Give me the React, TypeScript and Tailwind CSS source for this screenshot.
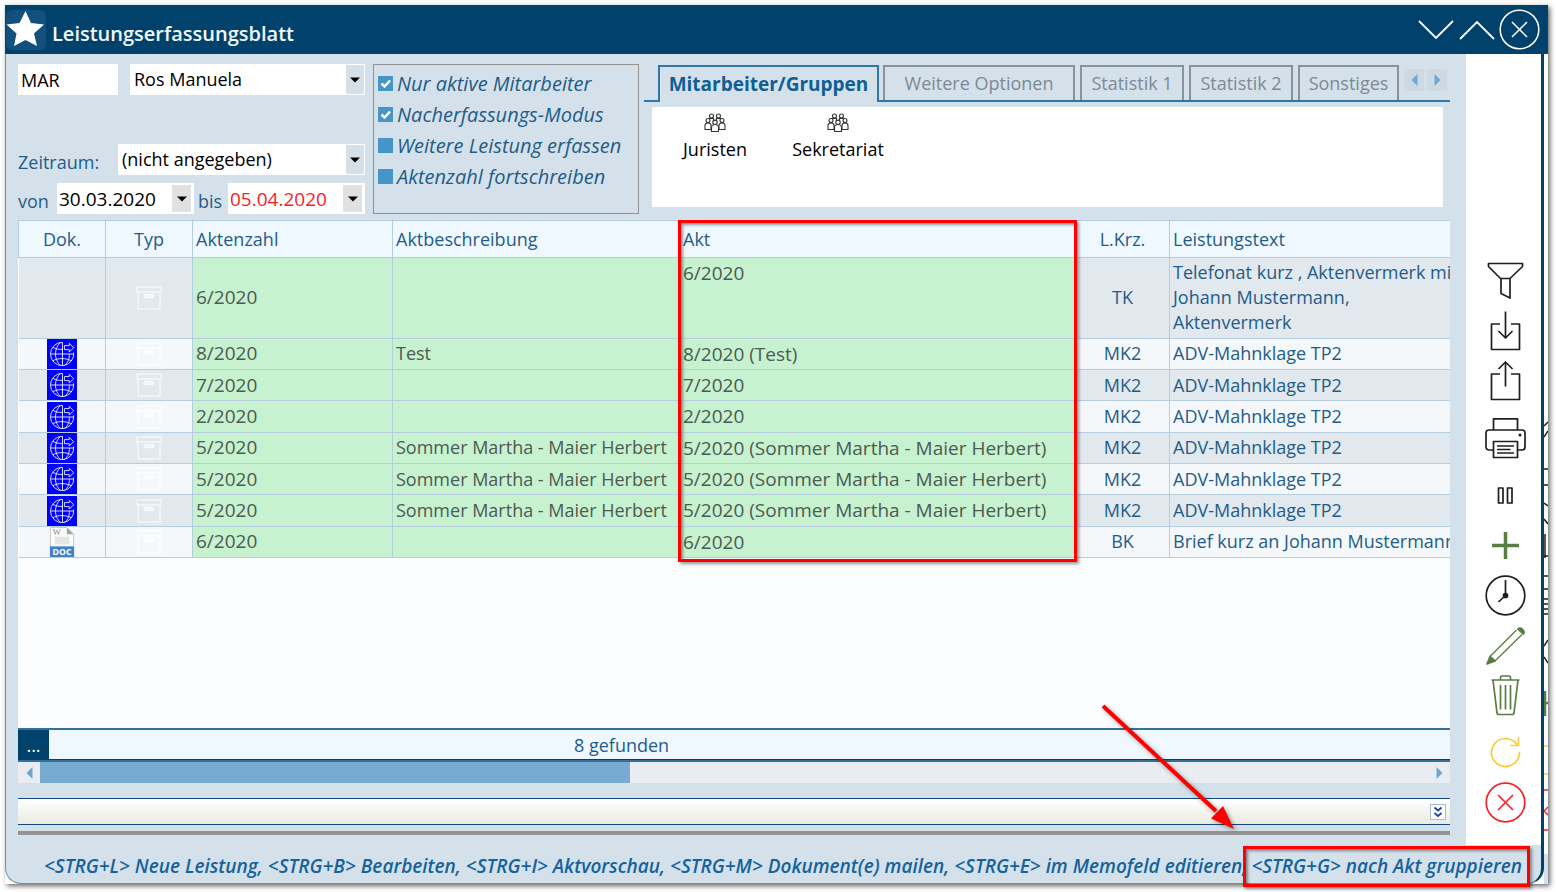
import React, { useState } from 'react';

interface Entry {
  doc: 'none' | 'web' | 'word';
  file: string;
  description: string;
  akt: string;
  code: string;
  text: string[];
}

const sommer = 'Sommer Martha - Maier Herbert';

const ENTRIES: Entry[] = [
  { doc: 'none', file: '6/2020', description: '', akt: '6/2020', code: 'TK', text: ['Telefonat kurz , Aktenvermerk mit', 'Johann Mustermann,', 'Aktenvermerk'] },
  { doc: 'web', file: '8/2020', description: 'Test', akt: '8/2020 (Test)', code: 'MK2', text: ['ADV-Mahnklage TP2'] },
  { doc: 'web', file: '7/2020', description: '', akt: '7/2020', code: 'MK2', text: ['ADV-Mahnklage TP2'] },
  { doc: 'web', file: '2/2020', description: '', akt: '2/2020', code: 'MK2', text: ['ADV-Mahnklage TP2'] },
  { doc: 'web', file: '5/2020', description: sommer, akt: `5/2020 (${sommer})`, code: 'MK2', text: ['ADV-Mahnklage TP2'] },
  { doc: 'web', file: '5/2020', description: sommer, akt: `5/2020 (${sommer})`, code: 'MK2', text: ['ADV-Mahnklage TP2'] },
  { doc: 'web', file: '5/2020', description: sommer, akt: `5/2020 (${sommer})`, code: 'MK2', text: ['ADV-Mahnklage TP2'] },
  { doc: 'word', file: '6/2020', description: '', akt: '6/2020', code: 'BK', text: ['Brief kurz an Johann Mustermann'] },
];

const HINTS = '<STRG+L> Neue Leistung, <STRG+B> Bearbeiten, <STRG+I> Aktvorschau, <STRG+M> Dokument(e) mailen, <STRG+E> im Memofeld editieren,';
const GROUP_HINT = '<STRG+G> nach Akt gruppieren';

const Caret = () => (
  <svg viewBox="0 0 10 6" className="w-[10px] h-[6px]" fill="#000">
    <path d="M0 0.5h10L5 5.5z" />
  </svg>
);

const WebDocIcon = () => (
  <svg viewBox="0 0 31 31" className="block mx-auto w-[30px] h-[30px]" fill="none" stroke="#dfe0ff" strokeWidth="1">
    <rect width="31" height="31" fill="#0000fe" stroke="none" />
    <path d="M16 3.5A12 12 0 1 0 27.500 14" />
    <path d="M16 3.5v24M3.500 15.500h24M14 3.500c-7 6-7 18 0 24M18 27.500c4-3 5.500-8 5-12" />
    <path d="M6 8.500c3 2 6 2.300 10 2.300M6 22.500c5-3 14-3 19 0" />
    <path d="M18 6.800h5V4.500l4.500 4.500-4.500 4.500v-2.500h-5z" />
  </svg>
);

const WordDocIcon = () => (
  <svg viewBox="0 0 31 31" className="block mx-auto w-[30px] h-[30px]">
    <path d="M3.500 0.500h17l7 7v23h-24z" fill="#fbfbfb" stroke="#c9c9c9" />
    <path d="M20.500 0.500v7h7z" fill="#a3a3a3" />
    <rect x="8" y="10" width="15" height="8" fill="#e4e6e4" />
    <rect x="3" y="20" width="25" height="11" fill="#4084c4" />
    <text x="6" y="8.500" fontSize="9" fontFamily="Liberation Serif, serif" fill="#8b8b8b">W</text>
    <text x="15.500" y="29" fontSize="9" fontWeight="700" textAnchor="middle" fontFamily="Open Sans, sans-serif" fill="#fff">DOC</text>
  </svg>
);

const ArchiveIcon = () => (
  <svg viewBox="0 0 26 26" className="block mx-auto w-[26px] h-[26px]" fill="none" stroke="#ffffff" strokeOpacity="0.7" strokeWidth="1.300">
    <path d="M1 2h24v5H1zM2 7v17h22V7" />
    <rect x="8" y="9.500" width="10" height="3" rx="1.500" fill="#ffffff" fillOpacity="0.5" />
  </svg>
);

const PeopleIcon = () => (
  <svg viewBox="0 0 22 20" className="w-[22px] h-[20px]" fill="#fff" stroke="#333" strokeWidth="1.100">
    <path d="M4.500 9V5.500h5V10M12.500 10V5.500h5V9" />
    <circle cx="7.500" cy="3" r="2" />
    <circle cx="14.500" cy="3" r="2" />
    <path d="M1 16.500v-4c0-2 1-2.500 3-2.500s3 1 3 2.500v4zM15 16.500v-4c0-2 1-2.500 3-2.500s3 1 3 2.500v4z" />
    <circle cx="4" cy="7.500" r="2" />
    <circle cx="18" cy="7.500" r="2" />
    <path d="M7.500 18.500v-4c0-2 1.200-3 3.500-3s3.500 1 3.500 3v4z" />
    <circle cx="11" cy="9.300" r="2.200" />
  </svg>
);

interface Tool {
  label: string;
  color: string;
  icon: React.ReactNode;
}

const TOOLS: Tool[][] = [
  [
    { label: 'Filtern', color: '#1e1e1e', icon: <path d="M3.500 2.500h34v3L25 17.500h-9.500L3.500 5.500zM16 17.500V32.500l9 4.500V17.500" /> },
    { label: 'Importieren', color: '#1e1e1e', icon: <path d="M15 13H6.500v25.500h28V13H26M20.500 0.500v26M13.500 20l7 7 7-7" /> },
    { label: 'Exportieren', color: '#1e1e1e', icon: <path d="M15 13H6.500V38.500h28V13H26M20.500 25.500V1.500M13.500 8l7-7 7 7" /> },
  ],
  [
    {
      label: 'Drucken',
      color: '#1e1e1e',
      icon: (
        <>
          <path d="M8.500 12V0.800h24V12M8.500 32H4a3 3 0 0 1-3-3V15a3 3 0 0 1 3-3h33a3 3 0 0 1 3 3v14a3 3 0 0 1-3 3h-4.500" />
          <path d="M8.500 23.500h24V39.500h-24zM12 28h17M12 31.500h13.500M12 35h17" />
          <circle cx="35" cy="17" r="1.500" fill="#1e1e1e" stroke="none" />
        </>
      ),
    },
  ],
  [
    { label: 'Pause', color: '#1e1e1e', icon: <path d="M13.500 13h4.500v15h-4.500zM22.500 13h4.500v15h-4.500z" /> },
    { label: 'Neu', color: '#5a7d41', icon: <path strokeWidth="3.500" d="M20.500 7v27M7 20.500h27" /> },
    {
      label: 'Zeit',
      color: '#1e1e1e',
      icon: (
        <>
          <circle cx="20.500" cy="20.500" r="19.300" />
          <path d="M20.500 5v15.500l-7 6.500" />
          <circle cx="20.500" cy="20.500" r="2" fill="#1e1e1e" />
        </>
      ),
    },
    {
      label: 'Bearbeiten',
      color: '#5a7d41',
      icon: (
        <>
          <path d="M5 31.500L31.500 5M10 36L37 9.500" strokeWidth="1.300" />
          <path d="M5 31.500l-3 7.500 8-3z" fill="#5a7d41" />
          <path d="M33 4c2-3 7.500 1.500 5.500 5z" fill="#5a7d41" />
        </>
      ),
    },
    {
      label: 'Löschen',
      color: '#5a7d41',
      icon: <path d="M6.500 5h28M8 5l4 33q.3 1.500 1.500 1.500h14q1.200 0 1.500-1.500L33 5M15.500 5V2.500q0-1.500 1.500-1.500h7q1.500 0 1.500 1.500V5M15.500 10v24.500M20.500 10v24.500M25.500 10v24.500" />,
    },
  ],
  [
    { label: 'Aktualisieren', color: '#fcc93b', icon: <path d="M34.500 20A14 14 0 1 1 32 12.500M33.500 5.500v8h-8" /> },
    {
      label: 'Schließen',
      color: '#f4242a',
      icon: (
        <>
          <circle cx="20.500" cy="20.500" r="19.300" />
          <path d="M13 13l15 15M28 13L13 28" />
        </>
      ),
    },
  ],
];

interface PickerProps {
  id: string;
  value: string;
  label: string;
}

const Picker: React.FC<PickerProps> = ({ id, value, label }) => (
  <div className="relative flex-1 h-[31px] bg-white">
    <select id={id} aria-label={label} defaultValue={value} className="w-full h-full appearance-none bg-transparent pl-1 pr-6 text-black">
      <option>{value}</option>
    </select>
    <span className="absolute right-px top-px bottom-px w-[18px] bg-[#d5e1ea] flex items-center justify-center pointer-events-none">
      <Caret />
    </span>
  </div>
);

interface DateFieldProps {
  id: string;
  value: string;
  tone: string;
}

const DateField: React.FC<DateFieldProps> = ({ id, value, tone }) => (
  <div className="flex flex-none w-[137px] h-[31px] bg-white items-center pr-[3px]">
    <input id={id} type="text" defaultValue={value} className={`flex-1 min-w-0 h-full pl-[2px] bg-transparent text-[19px] ${tone}`} />
    <button type="button" aria-label="Kalender" className="w-[19px] h-[27px] bg-[#e1e1e1] flex items-center justify-center">
      <Caret />
    </button>
  </div>
);

interface OptionProps {
  id: string;
  label: string;
  initial?: boolean;
}

const Option: React.FC<OptionProps> = ({ id, label, initial = false }) => {
  const [checked, setChecked] = useState(initial);
  return (
    <div className="flex items-center h-[31px] gap-1">
      <span className="relative w-[15px] h-[15px]">
        <input id={id} type="checkbox" checked={checked} onChange={() => setChecked(!checked)} className="block appearance-none w-[15px] h-[15px] bg-[#4595c7]" />
        {checked && (
          <svg viewBox="0 0 15 15" className="absolute inset-0 pointer-events-none" fill="none" stroke="#fff" strokeWidth="2.500">
            <path d="M3.500 7.500l3 3 5.500-6" />
          </svg>
        )}
      </span>
      <label htmlFor={id} className="italic text-[20px] text-[#1f5c88] whitespace-nowrap">{label}</label>
    </div>
  );
};

const TABS = [
  { label: 'Weitere Optionen', width: 'w-[192px]' },
  { label: 'Statistik 1', width: 'w-[104px]' },
  { label: 'Statistik 2', width: 'w-[104px]' },
  { label: 'Sonstiges', width: 'w-[101px]' },
];

const App: React.FC = () => {
  return (
    <div className="min-h-screen flex flex-col bg-white pt-[5px] pl-[5px] pr-2 pb-2 font-['Open_Sans',sans-serif] text-[18px] leading-[25px] text-[#1f5c88]">
      <div className="relative flex-1 flex flex-col bg-white shadow-[2px_2px_5px_rgba(0,0,0,0.6)]">
        <header className="flex items-center h-[49px] bg-[#00426b] pr-2">
          <div className="w-10 h-10 ml-px bg-[#12517d] rounded-md">
            <svg viewBox="0 0 40 40" fill="#fff">
              <path d="M19.500 1l5.500 12 13 1.500-10 9 3 12.500-11.500-6L8 36l2.500-12.500-10-9 13-1.500z" />
            </svg>
          </div>
          <h1 className="flex-1 pl-[6px] pt-2 text-[20px] font-semibold text-[#f3f7fa]">Leistungserfassungsblatt</h1>
          <div className="flex items-center gap-[3px] text-white">
            <button type="button" aria-label="Nach unten">
              <svg viewBox="0 0 38 24" className="w-[38px] h-6" fill="none" stroke="currentColor" strokeWidth="1.800">
                <path d="M2 3l17 17L36 3" />
              </svg>
            </button>
            <button type="button" aria-label="Nach oben">
              <svg viewBox="0 0 38 24" className="w-[38px] h-6" fill="none" stroke="currentColor" strokeWidth="1.800">
                <path d="M2 21L19 4l17 17" />
              </svg>
            </button>
            <button type="button" aria-label="Fenster schließen">
              <svg viewBox="0 0 41 41" className="w-[41px] h-[41px]" fill="none" stroke="currentColor" strokeWidth="1.500">
                <circle cx="20.500" cy="20.500" r="19.300" />
                <path d="M13 13l15 15M28 13L13 28" />
              </svg>
            </button>
          </div>
        </header>

        <div className="flex-1 flex">
          <div className="flex-1 min-w-0 flex flex-col bg-[#d5e1ea] border-l border-b border-[#6992b0] border-r-[3px] border-r-[#00426b] rounded-b-2xl">
            <div className="flex-1 flex">
              <main className="flex-1 min-w-0 flex flex-col pl-3 pr-4 pt-[10px]">
                <section className="flex items-start h-[156px]">
                  <div className="w-[347px] flex flex-col">
                    <div className="flex gap-3 mb-[49px]">
                      <input type="text" aria-label="Kürzel" defaultValue="MAR" className="w-[100px] h-[31px] bg-white pl-[3px] text-black" />
                      <Picker id="employee" label="Mitarbeiter" value="Ros Manuela" />
                    </div>
                    <div className="flex mb-2">
                      <label htmlFor="period" className="w-[100px] pt-[6px]">Zeitraum:</label>
                      <Picker id="period" label="Zeitraum" value="(nicht angegeben)" />
                    </div>
                    <div className="flex justify-between">
                      <label htmlFor="from" className="pt-[6px]">von</label>
                      <div className="flex gap-1">
                        <DateField id="from" value="30.03.2020" tone="text-black" />
                        <label htmlFor="to" className="w-[26px] pt-[6px]">bis</label>
                        <DateField id="to" value="05.04.2020" tone="text-[#fb1b26]" />
                      </div>
                    </div>
                  </div>

                  <div className="ml-2 w-[266px] h-[150px] border border-[#929292] pl-1 pt-[3px]">
                    <Option id="opt-active" label="Nur aktive Mitarbeiter" initial />
                    <Option id="opt-late" label="Nacherfassungs-Modus" initial />
                    <Option id="opt-more" label="Weitere Leistung erfassen" />
                    <Option id="opt-number" label="Aktenzahl fortschreiben" />
                  </div>

                  <div className="flex-1 min-w-0 ml-[5px]">
                    <div className="flex h-[38px] pt-px" role="tablist">
                      <span className="w-[14px] border-b-2 border-[#2f77a6]" />
                      <button type="button" role="tab" aria-selected="true" className="w-[221px] border-2 border-b-0 border-[#2f77a6] font-bold text-[19px] text-[#0f5f94] whitespace-nowrap">
                        Mitarbeiter/Gruppen
                      </button>
                      <div className="flex-1 flex gap-[5px] pl-1 border-b-2 border-[#2f77a6]">
                        {TABS.map((tab) => (
                          <button key={tab.label} type="button" role="tab" aria-selected="false" className={`${tab.width} border-2 border-b-0 border-[#84939c] text-[#7b8a94] whitespace-nowrap`}>
                            {tab.label}
                          </button>
                        ))}
                        <div className="flex gap-[3px] pt-1">
                          <button type="button" aria-label="Zurück" className="w-5 h-[22px] bg-[#cddae3] flex items-center justify-center">
                            <svg viewBox="0 0 7 12" className="w-[7px] h-3" fill="#6ca7d2"><path d="M6.500 0v12L0.500 6z" /></svg>
                          </button>
                          <button type="button" aria-label="Weiter" className="w-5 h-[22px] bg-[#cddae3] flex items-center justify-center">
                            <svg viewBox="0 0 7 12" className="w-[7px] h-3" fill="#6ca7d2"><path d="M0.500 0v12l6-6z" /></svg>
                          </button>
                        </div>
                      </div>
                    </div>
                    <div className="mt-[5px] ml-2 mr-[7px] h-[100px] bg-white flex pt-[6px] text-black">
                      <button type="button" className="w-[126px] h-[50px] flex flex-col items-center gap-1">
                        <PeopleIcon />
                        Juristen
                      </button>
                      <button type="button" className="w-[120px] h-[50px] flex flex-col items-center gap-1">
                        <PeopleIcon />
                        Sekretariat
                      </button>
                    </div>
                  </div>
                </section>

                <section className="relative flex-1 min-h-[508px] bg-[#fbfdff] overflow-hidden">
                  <table className="w-full h-[338px] table-fixed border-collapse whitespace-nowrap">
                    <colgroup>
                      <col className="w-[87px]" />
                      <col className="w-[87px]" />
                      <col className="w-[200px]" />
                      <col className="w-[287px]" />
                      <col className="w-[396px]" />
                      <col className="w-[94px]" />
                      <col />
                    </colgroup>
                    <thead>
                      <tr className="h-[37px] bg-[#f0f8ff] text-left">
                        <th className="border border-[#b6cddd] font-normal text-center">Dok.</th>
                        <th className="border border-[#b6cddd] font-normal text-center">Typ</th>
                        <th className="border border-[#b6cddd] font-normal pl-[3px]">Aktenzahl</th>
                        <th className="border border-[#b6cddd] font-normal pl-[3px]">Aktbeschreibung</th>
                        <th className="border border-[#b6cddd] font-normal pl-[3px]">Akt</th>
                        <th className="border border-[#b6cddd] font-normal text-center">L.Krz.</th>
                        <th className="border border-r-0 border-[#b6cddd] font-normal pl-[3px]">Leistungstext</th>
                      </tr>
                    </thead>
                    <tbody>
                      {ENTRIES.map((entry, i) => (
                        <tr key={i} className={i % 2 === 0 ? 'bg-[#e1e8ee]' : 'bg-[#f4f8fb]'}>
                          <td className="border border-l-0 border-[#b6cddd]">
                            {entry.doc === 'web' && <WebDocIcon />}
                            {entry.doc === 'word' && <WordDocIcon />}
                          </td>
                          <td className="border border-[#b6cddd]"><ArchiveIcon /></td>
                          <td className="border border-[#b6cddd] bg-[#c6f2d0] text-[19px] text-[#4d5a52] pl-[3px]">{entry.file}</td>
                          <td className="border border-[#b6cddd] bg-[#c6f2d0] text-[#4d5a52] pl-[3px]">{entry.description}</td>
                          <td className="border border-[#b6cddd] bg-[#c6f2d0] text-[19px] text-[#4d5a52] pl-[3px] pt-[3px] align-top">{entry.akt}</td>
                          <td className="border border-[#b6cddd] text-center">{entry.code}</td>
                          <td className="border border-r-0 border-[#b6cddd] pl-[3px] py-[2px] overflow-hidden">
                            {entry.text.map((line) => (
                              <div key={line}>{line}</div>
                            ))}
                          </td>
                        </tr>
                      ))}
                    </tbody>
                  </table>
                  {/* marks the Akt column */}
                  <div className="absolute top-0 left-[660px] w-[399px] h-[342px] border-3 border-[#fe0000] shadow-[2px_2px_3px_rgba(0,0,0,0.4),inset_2px_2px_3px_rgba(0,0,0,0.4)] pointer-events-none" />
                </section>

                <div className="flex h-[34px] bg-[#f0f8ff] border-t-2 border-b-2 border-[#37719a]">
                  <button type="button" className="w-[31px] bg-[#00426b] text-white">...</button>
                  <div className="flex-1 border-b border-[#00426b] pl-[525px] pt-[3px]">8 gefunden</div>
                </div>
                <div className="flex h-[21px] bg-[#e9edf2]">
                  <button type="button" aria-label="Nach links" className="w-[22px] flex items-center justify-center">
                    <svg viewBox="0 0 7 12" className="w-[7px] h-3" fill="#6ca7d2"><path d="M6.500 0v12L0.500 6z" /></svg>
                  </button>
                  <div className="flex-1">
                    <div className="w-5/12 h-full bg-[#78abd2] box-content pr-3" />
                  </div>
                  <button type="button" aria-label="Nach rechts" className="w-[22px] flex items-center justify-center">
                    <svg viewBox="0 0 7 12" className="w-[7px] h-3" fill="#6ca7d2"><path d="M0.500 0v12l6-6z" /></svg>
                  </button>
                </div>

                <div className="mt-[15px] h-[27px] flex items-center justify-end pr-1 border-y border-[#15497a] bg-linear-to-b from-white via-[#f5f5f0] to-[#ebebe3]">
                  <button type="button" aria-label="Aufklappen" className="w-4 h-4 bg-white border border-[#a9b9df]">
                    <svg viewBox="0 0 14 14" fill="none" stroke="#1c44a8" strokeWidth="1.800">
                      <path d="M3.500 2.500L7 5.500l3.500-3M3.500 8L7 11l3.500-3" />
                    </svg>
                  </button>
                </div>
                <div className="mt-[6px] mb-[10px] h-1 bg-[#929496]" />
              </main>

              <aside className="w-[75px] bg-white flex flex-col justify-end items-center gap-[7px] pl-[3px] pb-[18px]">
                {TOOLS.map((group, i) => (
                  <div key={i} className="flex flex-col">
                    {group.map((tool) => (
                      <button key={tool.label} type="button" aria-label={tool.label} className="w-[50px] h-[50px] flex items-center justify-center">
                        <svg viewBox="0 0 41 41" className="w-[41px] h-[41px]" fill="none" stroke={tool.color} strokeWidth="1.700" strokeLinejoin="round">
                          {tool.icon}
                        </svg>
                      </button>
                    ))}
                  </div>
                ))}
              </aside>
            </div>

            <footer className="h-[38px] flex items-center pl-[38px] pt-1 text-[19px] font-semibold italic text-[#14639a] whitespace-nowrap">
              <span>{HINTS}</span>
              <span className="relative pl-1">
                {GROUP_HINT}
                <span className="absolute -inset-y-2 -left-1 -right-2 border-3 border-[#fe0000] shadow-[2px_2px_3px_rgba(0,0,0,0.4),inset_2px_2px_3px_rgba(0,0,0,0.4)]" />
              </span>
            </footer>
          </div>

          {/* edge of the window lying behind */}
          <svg viewBox="0 0 4 830" className="w-1 h-[830px]" fill="none" stroke="#1e1e1e" strokeWidth="1.500">
            <path d="M0 372l4-4M0 383l4-6M0 415h4M0 431h4M0 449l4 3M0 465l4 5M1 480v24M0 502h4M0 522h4M0 535h4M0 545h4M0 550h4M0 555h4M0 560h4M0 592l4-6M0 603l4 6" />
            <path d="M1 637v25M0 649h4" stroke="#5a7d41" strokeWidth="2.500" />
            <path d="M0 692h4M0 720h4" stroke="#fcc93b" />
            <path d="M0 736h4M0 776h4M0 757l4-4M0 757l4 4" stroke="#f4242a" />
            <rect y="800" width="4" height="30" fill="#d5e1ea" stroke="none" />
          </svg>
        </div>

        {/* pointer to the grouping shortcut */}
        <svg viewBox="0 0 140 130" className="absolute right-[308px] bottom-[52px] w-[140px] h-[130px] drop-shadow-[2px_2px_2px_rgba(0,0,0,0.4)] pointer-events-none">
          <path d="M3 4l113 105" stroke="#fe0000" strokeWidth="4" />
          <path d="M134 127l-23-10.500 12-12.500z" fill="#fe0000" />
        </svg>
      </div>
    </div>
  );
};

export default App;
